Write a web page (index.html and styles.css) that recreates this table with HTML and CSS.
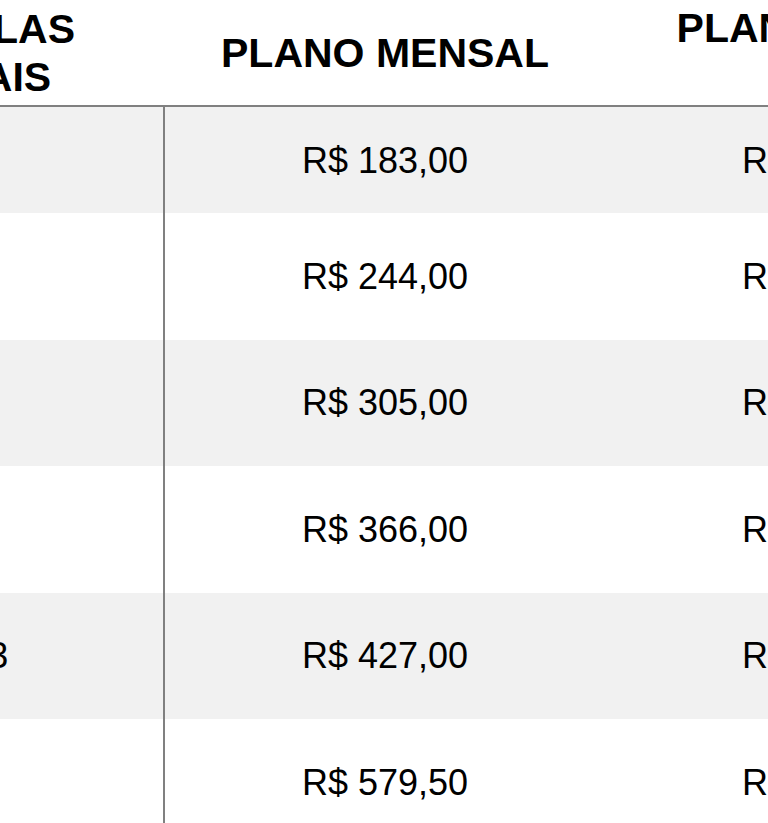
FILE: index.html
```html
<!DOCTYPE html>
<html lang="pt-BR">
<head>
<meta charset="utf-8">
<title>Planos</title>
<link rel="stylesheet" href="styles.css">
</head>
<body>
<div class="viewport">
  <table class="plans">
    <thead>
      <tr>
        <th class="col-label">Nº DE AULAS SEMANAIS</th>
        <th class="col-plan">PLANO MENSAL</th>
        <th class="col-plan col-top">PLANO ANUAL</th>
      </tr>
    </thead>
    <tbody>
      <tr class="row-first">
        <td class="cell-label">1x</td>
        <td>R$ 183,00</td>
        <td>R$ 164,70</td>
      </tr>
      <tr>
        <td class="cell-label">2x</td>
        <td>R$ 244,00</td>
        <td>R$ 219,60</td>
      </tr>
      <tr>
        <td class="cell-label">3x</td>
        <td>R$ 305,00</td>
        <td>R$ 274,50</td>
      </tr>
      <tr>
        <td class="cell-label">4x</td>
        <td>R$ 366,00</td>
        <td>R$ 329,40</td>
      </tr>
      <tr>
        <td class="cell-label">Turma 3</td>
        <td>R$ 427,00</td>
        <td>R$ 384,30</td>
      </tr>
      <tr>
        <td class="cell-label">6x</td>
        <td>R$ 579,50</td>
        <td>R$ 521,55</td>
      </tr>
    </tbody>
  </table>
</div>
</body>
</html>
```

FILE: styles.css
```css
html, body {
  margin: 0;
  padding: 0;
  background: #ffffff;
}

.viewport {
  width: 768px;
  height: 823px;
  overflow: hidden;
}

.plans {
  margin-left: -279px;
  border-collapse: separate;
  border-spacing: 0;
  table-layout: fixed;
  width: 1324px;
  font-family: "Liberation Sans", Arial, sans-serif;
  color: #000000;
}

.plans th,
.plans td {
  box-sizing: border-box;
  padding: 0;
  text-align: center;
  vertical-align: middle;
  white-space: nowrap;
}

.plans th {
  height: 107px;
  font-size: 41px;
  font-weight: 700;
  line-height: 48px;
  border-bottom: 2px solid #808080;
  white-space: normal;
}

.col-label {
  width: 444px;
  padding: 0 60px;
}

.col-plan {
  width: 440px;
}

.plans th.col-top {
  vertical-align: top;
  padding-top: 4px;
}

.plans td {
  height: 126.5px;
  font-size: 36px;
  line-height: 41px;
}

.plans tr.row-first td {
  height: 106px;
}

.plans tbody tr:nth-child(odd) td {
  background: #f1f1f1;
}

.plans td.cell-label {
  border-right: 2px solid #808080;
}
```
